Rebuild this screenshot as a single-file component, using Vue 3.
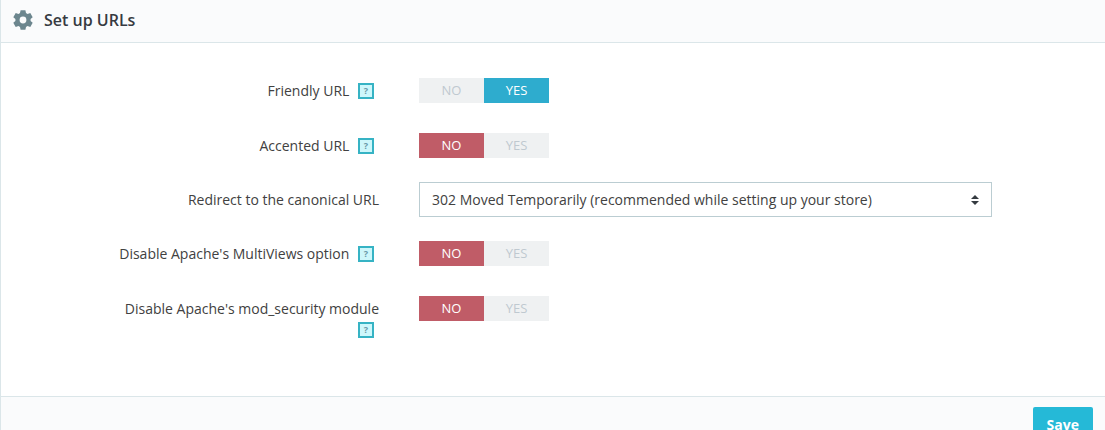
<script setup>
import { reactive, ref } from 'vue'

const settings = reactive([
  { id: 'friendly', label: 'Friendly URL', value: true },
  { id: 'accented', label: 'Accented URL', value: false },
  { id: 'redirect', label: 'Redirect to the canonical URL', select: true },
  { id: 'multiviews', label: "Disable Apache's MultiViews option", value: false },
  { id: 'modsecurity', label: "Disable Apache's mod_security module", value: false }
])
const redirect = ref('302')
</script>

<template>
  <form class="panel" @submit.prevent>
    <header class="panel-head">
      <svg class="gear" viewBox="0 0 20 20" aria-hidden="true">
        <path fill-rule="evenodd" d="M7.6 0.3h4.8l.6 2.8 1.5.9 2.8-.9 2.4 4.1-2.1 1.9v1.8l2.1 1.9-2.4 4.1-2.8-.9-1.5.9-.6 2.8H7.6L7 16.9 5.500 16l-2.800.9L.3 12.800l2.100-1.900V9.100L.3 7.200l2.400-4.100 2.800.9L7 3.100zM10 6.600a3.400 3.400 0 1 0 0 6.800 3.400 3.400 0 0 0 0-6.800z" />
      </svg>
      <h1>Set up URLs</h1>
    </header>

    <div class="rows">
      <div v-for="row in settings" :key="row.id" class="row" :class="{ 'row-select': row.select }">
        <div class="caption">
          <label v-if="row.select" :for="row.id">{{ row.label }}</label>
          <template v-else>
            <span :id="row.id + '-label'">{{ row.label }}</span>
            {{ ' ' }}
            <button type="button" class="help" :aria-label="'Help: ' + row.label">?</button>
          </template>
        </div>

        <div v-if="row.select" class="select-wrap">
          <select :id="row.id" v-model="redirect">
            <option value="302">302 Moved Temporarily (recommended while setting up your store)</option>
          </select>
          <svg class="arrows" viewBox="0 0 8 10" aria-hidden="true">
            <path d="M4 0 8 4H0zM0 6h8L4 10z" />
          </svg>
        </div>
        <div v-else class="switch" role="radiogroup" :aria-labelledby="row.id + '-label'">
          <label class="choice no" :class="{ on: !row.value }">
            <input v-model="row.value" type="radio" :name="row.id" :value="false">NO
          </label>
          <label class="choice yes" :class="{ on: row.value }">
            <input v-model="row.value" type="radio" :name="row.id" :value="true">YES
          </label>
        </div>
      </div>
    </div>

    <footer class="panel-foot">
      <button type="submit" class="save">Save</button>
    </footer>
  </form>
</template>

<style>
body {
  overflow: hidden;
  background: #fff;
}
</style>

<style scoped>
.panel {
  border-left: 1px solid #dbe6e9;
  color: #414141;
  font: 14px/21px "Open Sans", "Noto Sans", sans-serif;
}

.panel-head {
  display: flex;
  align-items: center;
  gap: 11px;
  padding: 8px 12px 10px;
  border-bottom: 1px solid #dbe6e9;
  background: #fafbfc;
}

.gear {
  width: 20px;
  height: 20px;
  fill: #6c868e;
}

h1 {
  margin: 0;
  color: #363a41;
  font-size: 16px;
  font-weight: 600;
  line-height: 24px;
}

.rows {
  display: flex;
  flex-direction: column;
  gap: 18px;
  padding: 29px 113px 56px 99px;
}

.row {
  display: grid;
  grid-template-columns: 279px 1fr;
  gap: 40px;
  align-items: start;
}

.caption {
  padding-top: 8px;
  text-align: right;
}

.row-select .caption {
  padding-top: 7px;
}

.help {
  width: 16px;
  height: 16px;
  margin: 0 5px;
  padding: 0;
  border: 2px solid #36b3c4;
  background: #cdf7fb;
  color: #6899a8;
  font: 700 9px/12px "Open Sans", sans-serif;
  vertical-align: 2px;
}

.switch {
  display: flex;
  width: 130px;
  padding: 6px 0;
}

.choice {
  position: relative;
  flex: 1;
  background: #eff1f2;
  color: #bfc9d0;
  font-size: 13px;
  line-height: 25px;
  text-align: center;
}

.choice input {
  position: absolute;
  inset: 0;
  margin: 0;
  opacity: 0;
}

.choice.on {
  color: #fff;
}

.no.on {
  background: #c05c67;
}

.yes.on {
  background: #2eacce;
}

.select-wrap {
  position: relative;
  display: flex;
}

select {
  flex: 1;
  min-width: 0;
  height: 35px;
  padding: 0 32px 0 12px;
  border: 1px solid #bbcdd2;
  border-radius: 0;
  appearance: none;
  background: #fff;
  color: #414141;
  font: inherit;
}

.arrows {
  position: absolute;
  top: 13px;
  right: 13px;
  width: 8px;
  height: 10px;
  fill: #343a40;
  pointer-events: none;
}

.panel-foot {
  display: flex;
  justify-content: flex-end;
  padding: 10px 12px;
  border-top: 1px solid #dbe6e9;
  background: #fafbfc;
}

.save {
  padding: 8px 14px;
  border: 0;
  border-radius: 2px;
  background: #25b9d7;
  color: #fff;
  font: 700 14px/20px "Open Sans", sans-serif;
}
</style>
